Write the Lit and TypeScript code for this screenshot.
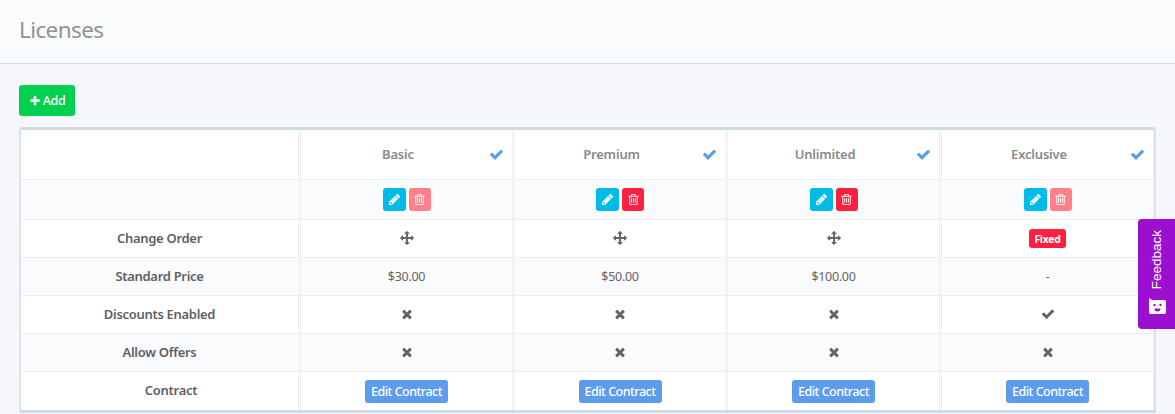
import { LitElement, html, css, svg } from "lit";
import { customElement } from "lit/decorators.js";

const P = {
  check: "M1671 566q0 40-28 68l-724 724-136 136q-28 28-68 28t-68-28l-136-136-362-362q-28-28-28-68t28-68l136-136q28-28 68-28t68 28l294 295 656-657q28-28 68-28t68 28l136 136q28 28 28 68z",
  times: "M1490 1322q0 40-28 68l-136 136q-28 28-68 28t-68-28l-294-294-294 294q-28 28-68 28t-68-28l-136-136q-28-28-28-68t28-68l294-294-294-294q-28-28-28-68t28-68l136-136q28-28 68-28t68 28l294 294 294-294q28-28 68-28t68 28l136 136q28 28 28 68t-28 68l-294 294 294 294q28 28 28 68z",
  plus: "M1600 736v192q0 40-28 68t-68 28h-416v416q0 40-28 68t-68 28h-192q-40 0-68-28t-28-68v-416h-416q-40 0-68-28t-28-68v-192q0-40 28-68t68-28h416v-416q0-40 28-68t68-28h192q40 0 68 28t28 68v416h416q40 0 68 28t28 68z",
  pencil: "M491 1536l91-91-235-235-91 91v107h128v128h107zm523-928q0-22-22-22-10 0-17 7l-542 542q-7 7-7 17 0 22 22 22 10 0 17-7l542-542q7-7 7-17zm-54-192l416 416-832 832h-416v-416zm683 96q0 53-37 90l-166 166-416-416 166-165q36-38 90-38 53 0 91 38l235 234q37 39 37 91z",
  trash: "M704 736v576q0 14-9 23t-23 9h-64q-14 0-23-9t-9-23v-576q0-14 9-23t23-9h64q14 0 23 9t9 23zm256 0v576q0 14-9 23t-23 9h-64q-14 0-23-9t-9-23v-576q0-14 9-23t23-9h64q14 0 23 9t9 23zm256 0v576q0 14-9 23t-23 9h-64q-14 0-23-9t-9-23v-576q0-14 9-23t23-9h64q14 0 23 9t9 23zm128 724v-948h-896v948q0 22 7 40.5t14.5 27 10.5 8.5h832q3 0 10.5-8.5t14.5-27 7-40.5zm-672-1076h448l-48-117q-7-9-17-11h-317q-10 2-17 11zm928 32v64q0 14-9 23t-23 9h-96v948q0 83-47 143.5t-113 60.5h-832q-66 0-113-58.5t-47-141.5v-952h-96q-14 0-23-9t-9-23v-64q0-14 9-23t23-9h309l70-167q15-37 54-63t79-26h320q40 0 79 26t54 63l70 167h309q14 0 23 9t9 23z",
  arrows: "M1792 896q0 26-19 45l-256 256q-19 19-45 19t-45-19-19-45v-128h-384v384h128q26 0 45 19t19 45-19 45l-256 256q-19 19-45 19t-45-19l-256-256q-19-19-19-45t19-45 45-19h128v-384h-384v128q0 26-19 45t-45 19-45-19l-256-256q-19-19-19-45t19-45l256-256q19-19 45-19t45 19 19 45v128h384v-384h-128q-26 0-45-19t-19-45 19-45l256-256q19-19 45-19t45 19l256 256q19 19 19 45t-19 45-45 19h-128v384h384v-128q0-26 19-45t45-19 45 19l256 256q19 19 19 45z",
};
const icon = (name: keyof typeof P, size: number) => html`<svg class="ic" width=${size} height=${size} viewBox="0 0 1792 1792" fill="currentColor">${svg`<path d=${P[name]}></path>`}</svg>`;

const plans = [
  { name: "Basic", del: false, order: true, price: "$30.00", disc: false },
  { name: "Premium", del: true, order: true, price: "$50.00", disc: false },
  { name: "Unlimited", del: true, order: true, price: "$100.00", disc: false },
  { name: "Exclusive", del: false, order: false, price: "-", disc: true },
];

@customElement("app-root")
export class AppRoot extends LitElement {
  static styles = css`
    :host { display: block; width: 1175px; height: 414px; overflow: hidden; position: relative; background: #f5f7fa; font-family: "Noto Sans", sans-serif; font-size: 13px; color: #656565; }
    .ic { display: block; }
    .head { background: #fafbfc; border-bottom: 1px solid #cfdbe2; padding: 0 0 5px 19px; display: flex; align-items: center; height: 58px; }
    h1 { margin: 0; font-size: 22.5px; font-weight: 400; color: #929292; letter-spacing: -0.6px; }
    .body { padding: 21px 19px 0; }
    .add { display: flex; align-items: center; justify-content: center; gap: 2px; width: 56px; height: 31px; border-radius: 3px; background: #00d14f; color: #fff; font-weight: 500; font-size: 12.5px; letter-spacing: -0.4px; }
    .tbl { margin-top: 11px; width: 1137px; box-sizing: border-box; border-radius: 4px 4px 0 0; border: solid #cfdbe2; border-width: 3px 2px 3px 2px; background: #fff; display: grid; grid-template-columns: 277px 3px 211px 3px 210px 3px 211px 3px 212px; grid-template-rows: 50px 40px 38px 38px 38px 38px 38px; border-left-color: #dde4e9; border-right-color: #dde4e9; }
    .row { display: contents; }
    .c { display: flex; align-items: center; justify-content: center; border-bottom: 1px solid #eeeeee; box-sizing: border-box; }
    .last .c { border-bottom: 0; }
    .alt .c, .alt .sep { background: #fafbfc; }
    .sep { background: #fff; border: solid #eeeeee; border-width: 0 1px; }
    .c.end { border-right: 1px solid #eeeeee; }
    .label { font-weight: 600; color: #5f5f68; letter-spacing: -0.3px; font-size: 13px; padding-bottom: 2px; }
    .contract-label { padding-left: 23px; }
    .th { position: relative; font-weight: 600; color: #8a8a8a; letter-spacing: -0.2px; font-size: 13px; padding: 0 17px 2px 0; }
    .th .ic { position: absolute; right: 8px; top: 17px; color: #5d9cec; }
    .mark { padding-bottom: 2px; }
    .btns { display: flex; gap: 3px; }
    .b { display: flex; align-items: center; justify-content: center; border-radius: 3px; color: #fff; height: 23px; }
    .edit { width: 23px; background: #00bae8; }
    .del { width: 22px; background: #ff1f40; }
    .del.off { background: #ff8088; }
    .fixed { background: #ff1f40; color: #fff; border-radius: 3px; font-size: 10.5px; font-weight: 700; letter-spacing: -0.3px; height: 19px; width: 37px; display: flex; align-items: center; justify-content: center; }
    .price { font-size: 12.5px; letter-spacing: -0.3px; color: #656565; }
    .contract { background: #5d9cec; color: #fff; border-radius: 3px; height: 23px; width: 83px; display: flex; align-items: center; justify-content: center; font-size: 12.5px; font-weight: 500; letter-spacing: -0.5px; margin-top: 1px; white-space: nowrap; }
    .fb { position: absolute; left: 1138px; top: 219px; width: 37px; height: 110px; background: #9c0fd0; border-radius: 4px 0 0 4px; color: #fff; display: flex; flex-direction: column; align-items: center; justify-content: flex-end; gap: 9px; padding-bottom: 15px; box-sizing: border-box; }
    .fb span { writing-mode: vertical-rl; transform: rotate(180deg); font-family: "Liberation Sans", sans-serif; font-size: 13.5px; line-height: 1; }
  `;

  private row(label: string, cls: string, cell: (p: (typeof plans)[number]) => unknown, labelCls = "", cellCls = "") {
    return html`<div class="row ${cls}">
      <div class="c label ${labelCls}">${label}</div>
      ${plans.map((p, i) => html`<div class="sep"></div><div class="c ${cellCls} ${i === 3 ? "end" : ""}">${cell(p)}</div>`)}
    </div>`;
  }

  render() {
    return html`
      <div class="head"><h1>Licenses</h1></div>
      <div class="body">
        <div class="add">${icon("plus", 12)}Add</div>
        <div class="tbl">
          <div class="row">
            <div class="c"></div>
            ${plans.map((p, i) => html`<div class="sep"></div><div class="c th ${i === 3 ? "end" : ""}">${p.name}${icon("check", 15)}</div>`)}
          </div>
          ${this.row("", "alt", (p) => html`<div class="btns">
            <div class="b edit">${icon("pencil", 13)}</div>
            <div class="b del ${p.del ? "" : "off"}">${icon("trash", 13)}</div>
          </div>`)}
          ${this.row("Change Order", "", (p) => p.order ? html`<div class="mark">${icon("arrows", 14)}</div>` : html`<div class="fixed">Fixed</div>`)}
          ${this.row("Standard Price", "alt", (p) => html`<span class="price">${p.price}</span>`)}
          ${this.row("Discounts Enabled", "", (p) => html`<div class="mark">${icon(p.disc ? "check" : "times", 14)}</div>`)}
          ${this.row("Allow Offers", "alt", () => html`<div class="mark">${icon("times", 14)}</div>`)}
          ${this.row("Contract", "last", () => html`<div class="contract">Edit Contract</div>`, "contract-label")}
        </div>
      </div>
      <div class="fb">
        <span>Feedback</span>
        <svg width="18" height="16" viewBox="0 0 18 16"><path fill="#fff" d="M1 0L4 2H16a2 2 0 0 1 2 2V14a2 2 0 0 1-2 2H3a2 2 0 0 1-2-2Z"/><circle cx="6.5" cy="7" r="1.2" fill="#9c0fd0"/><circle cx="12.5" cy="7" r="1.2" fill="#9c0fd0"/><path d="M6.5 10.5a3 3 0 0 0 6 0Z" fill="#9c0fd0"/></svg>
      </div>
    `;
  }
}
